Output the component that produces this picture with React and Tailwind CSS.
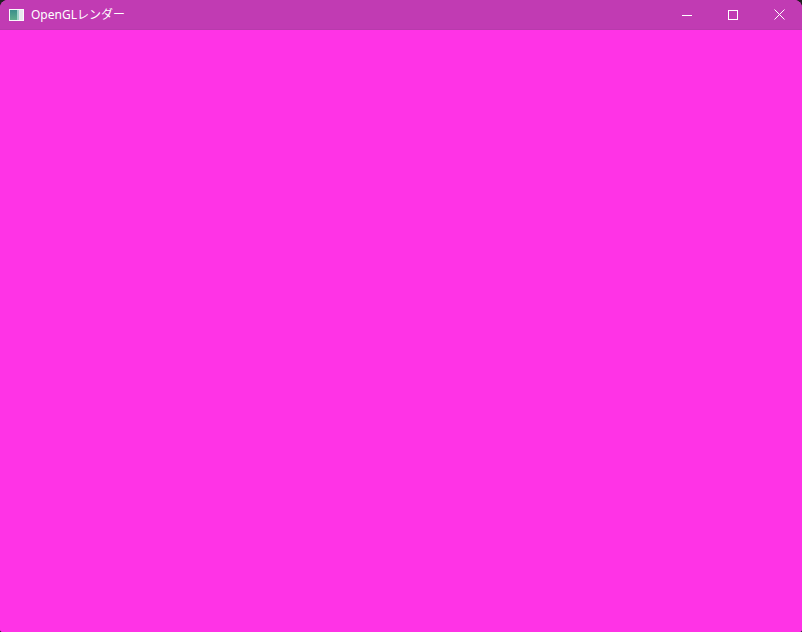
export default function App() {
  return (
    <div className="w-[802px] h-[632px] bg-[#202020] overflow-hidden">
      <div className="w-full h-full rounded-t-lg rounded-b-[3px] overflow-hidden flex flex-col bg-[#ff33e6]">
        {/* Title bar */}
        <div className="h-[30px] shrink-0 bg-[#c13bb3] flex items-center border-b border-[#b83aac]">
          <div className="w-[15px] h-[12px] ml-[9px] border border-white/80 bg-[#e8e8ee] flex">
            <div className="w-[7px] h-full bg-gradient-to-b from-[#3a8f8a] to-[#5fae8c]" />
            <div className="w-[2px] h-full bg-[#9fd3c9]" />
          </div>
          <span
            className="ml-[7px] text-[12px] text-white leading-none"
            style={{ fontFamily: '"Segoe UI", "Noto Sans", "Noto Sans CJK JP", sans-serif' }}
          >
            OpenGLレンダー
          </span>
          <div className="ml-auto flex h-full">
            <div className="w-[46px] h-full flex items-center justify-center">
              <svg width="10" height="10" viewBox="0 0 10 10">
                <path d="M0 5.5h10" stroke="white" strokeWidth="1" />
              </svg>
            </div>
            <div className="w-[46px] h-full flex items-center justify-center">
              <svg width="10" height="10" viewBox="0 0 10 10">
                <rect x="0.5" y="0.5" width="9" height="9" fill="none" stroke="white" strokeWidth="1" />
              </svg>
            </div>
            <div className="w-[46px] h-full flex items-center justify-center">
              <svg width="11" height="11" viewBox="0 0 11 11">
                <path d="M0.5 0.5l10 10M10.5 0.5l-10 10" stroke="white" strokeWidth="1" />
              </svg>
            </div>
          </div>
        </div>
        {/* Render area */}
        <div className="flex-1 bg-[#ff33e6]" />
      </div>
    </div>
  )
}
